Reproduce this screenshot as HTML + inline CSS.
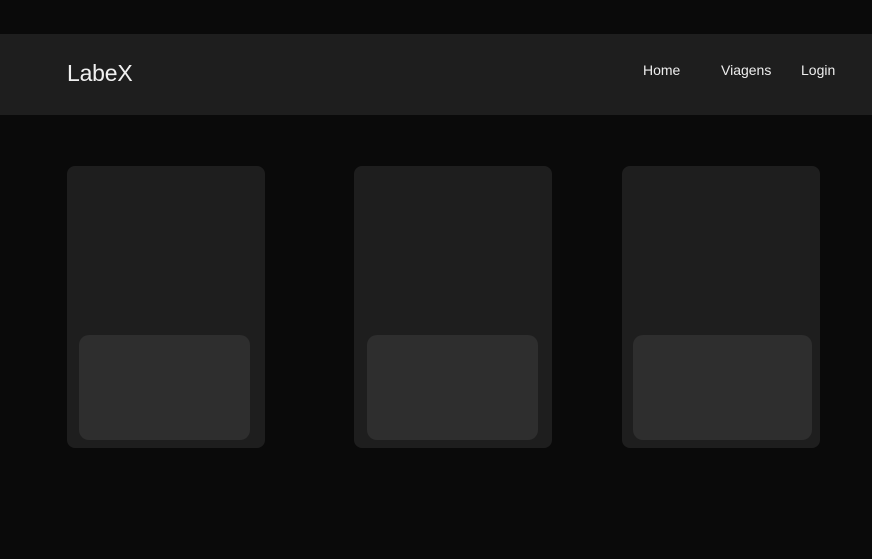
<!DOCTYPE html>
<html><head><style>
body{margin:0;width:872px;height:559px;background:#0a0a0a;position:relative;overflow:hidden;font-family:"Liberation Sans",sans-serif;color:#eee}
.h{position:absolute;left:0;top:34px;width:872px;height:81px;background:#1e1e1e}
.logo{position:absolute;left:67px;top:60px;font-size:23px;color:#f0f0f0;letter-spacing:-0.2px}
.n{position:absolute;top:62px;font-size:14px;color:#eee}
.c{position:absolute;top:166px;width:198px;height:282px;background:#1e1e1e;border-radius:8px}
.i{position:absolute;top:335px;height:105px;background:#2e2e2e;border-radius:10px}
</style></head><body>
<div class="h"></div>
<div class="logo">LabeX</div>
<div class="n" style="left:643px">Home</div>
<div class="n" style="left:721px">Viagens</div>
<div class="n" style="left:801px">Login</div>
<div class="c" style="left:67px"></div>
<div class="c" style="left:354px"></div>
<div class="c" style="left:622px"></div>
<div class="i" style="left:79px;width:171px"></div>
<div class="i" style="left:367px;width:171px"></div>
<div class="i" style="left:633px;width:179px"></div>
</body></html>
